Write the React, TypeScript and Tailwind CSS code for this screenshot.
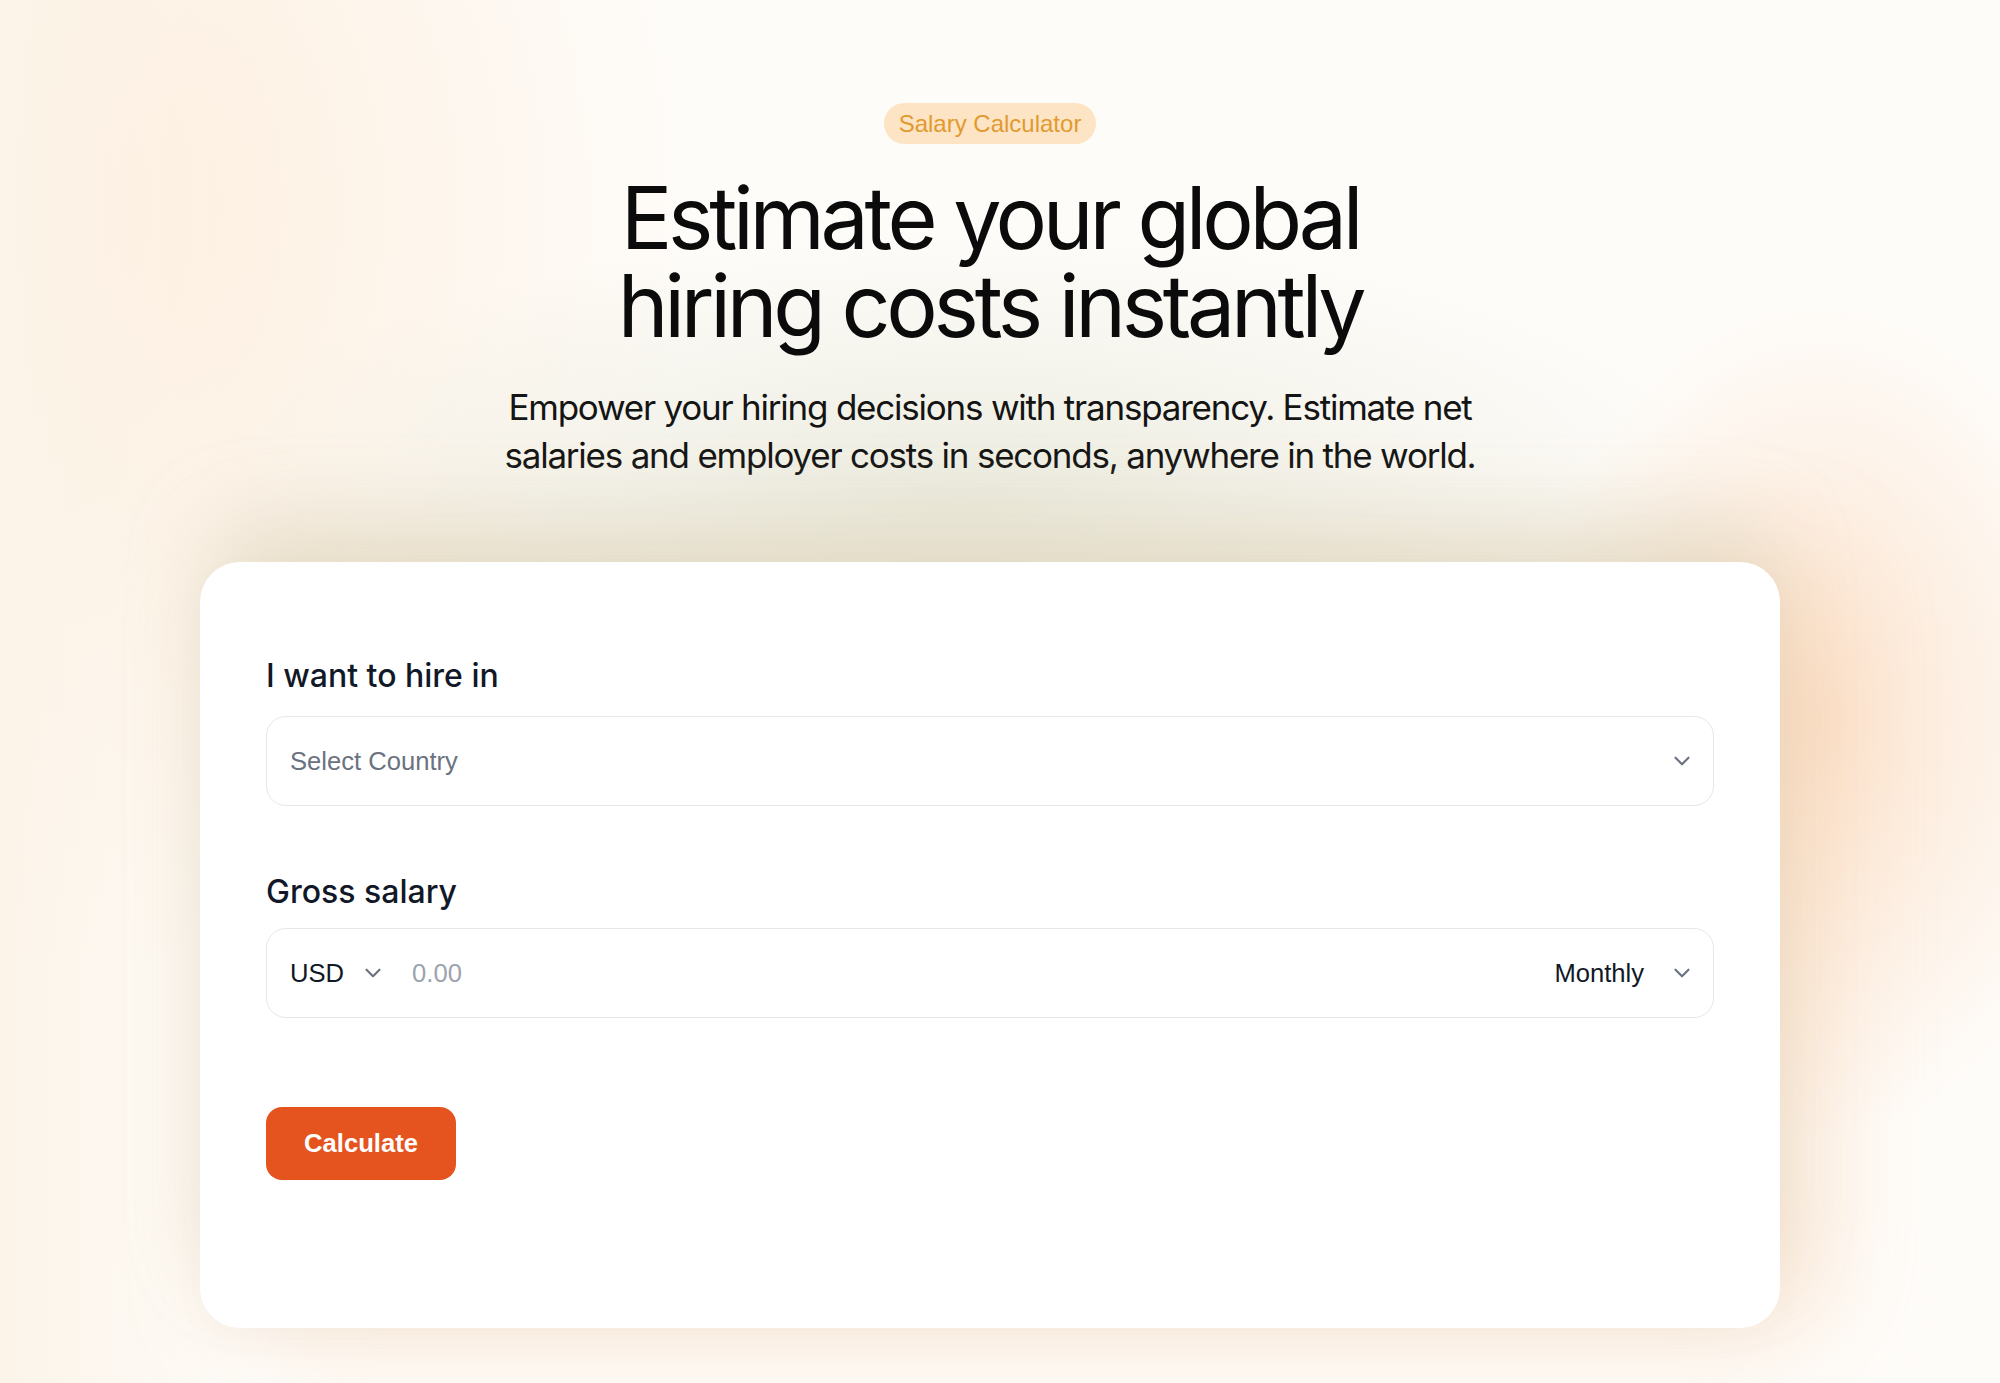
import React from "react";
import { ChevronDown } from "lucide-react";

export default function App() {
  return (
    <div
      className="relative min-h-[1383px] w-full overflow-hidden bg-[#fefcf9]"
      style={{ fontFamily: "Inter, 'Liberation Sans', sans-serif" }}
    >
      {/* background tints */}
      <div className="pointer-events-none absolute inset-0 bg-[radial-gradient(ellipse_1000px_1100px_at_0%_15%,#fdecd9_0%,rgba(253,236,217,0)_70%)]" />
      <div className="pointer-events-none absolute inset-0 bg-[linear-gradient(to_right,#fcf4e9_0px,rgba(252,244,233,0)_260px)]" />
      <div className="pointer-events-none absolute inset-0 bg-[radial-gradient(ellipse_1100px_380px_at_48%_36%,#ecece0_0%,rgba(236,236,224,0)_70%)]" />
      <div className="pointer-events-none absolute inset-0 bg-[radial-gradient(ellipse_420px_600px_at_91%_52%,#fce4cf_0%,rgba(252,228,207,0)_70%)]" />

      <div className="relative flex flex-col items-center pr-[20px] pt-[103px]">
        <div className="flex h-[41px] items-center rounded-full bg-[#fde4c4] px-[15px] text-[24px] text-[#e29a30] [font-family:'Liberation_Sans',Arial,sans-serif]">
          Salary Calculator
        </div>

        <h1 className="mt-[30px] flex flex-col items-center text-center text-[86px] font-normal leading-[88px] tracking-[-0.05em] text-[#0b0b0b]">
          <span className="block">Estimate your global</span>
          <span className="block">hiring costs instantly</span>
        </h1>

        <p className="mt-[33px] text-center text-[35px] leading-[48px] tracking-[-0.035em] text-[#141414]">
          Empower your hiring decisions with transparency. Estimate net
          <br />
          salaries and employer costs in seconds, anywhere in the world.
        </p>

        <div className="mt-[83px] w-[1580px] rounded-[40px] bg-white px-[66px] pb-[148px] pt-[94px] shadow-[0_-50px_80px_-10px_rgba(205,205,180,0.4),40px_0_110px_0px_rgba(248,196,150,0.4),0_12px_40px_rgba(0,0,0,0.025)]">
          <div className="mb-[20px] text-[32px] font-medium leading-[40px] text-[#111827]">
            I want to hire in
          </div>
          <div className="flex h-[90px] items-center justify-between rounded-[20px] border border-[#e5e7eb] pl-[23px] pr-[18px] text-[25.6px] [font-family:'Liberation_Sans',Arial,sans-serif]">
            <span className="text-[#6b7280]">Select Country</span>
            <ChevronDown size={26} strokeWidth={2} className="text-[#6b7280]" />
          </div>

          <div className="mb-[16px] mt-[66px] text-[32px] font-medium leading-[40px] text-[#111827]">
            Gross salary
          </div>
          <div className="flex h-[90px] items-center rounded-[20px] border border-[#e5e7eb] pl-[23px] pr-[18px] text-[25.6px] [font-family:'Liberation_Sans',Arial,sans-serif]">
            <span className="text-[#111827]">USD</span>
            <ChevronDown size={26} strokeWidth={2} className="ml-[16px] text-[#6b7280]" />
            <span className="ml-[26px] flex-1 text-[#9ca3af]">0.00</span>
            <span className="text-[#111827]">Monthly</span>
            <ChevronDown size={26} strokeWidth={2} className="ml-[25px] text-[#6b7280]" />
          </div>

          <button className="mt-[89px] flex h-[73px] w-[190px] items-center justify-center rounded-[16px] bg-[#e5541f] text-[25.6px] font-bold text-white [font-family:'Liberation_Sans',Arial,sans-serif]">
            Calculate
          </button>
        </div>
      </div>
    </div>
  );
}
